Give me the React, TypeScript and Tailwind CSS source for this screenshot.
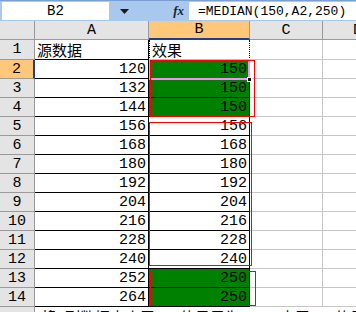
import React from "react";

const mono = { fontFamily: '"Liberation Mono", "Noto Sans CJK SC", monospace' };
const cjk = { fontFamily: '"Noto Sans CJK SC", "Liberation Sans", sans-serif' };

// rows 2..14: A value, B value, B green?
const rows: { a: string; b: string; green: boolean }[] = [
  { a: "120", b: "150", green: true },
  { a: "132", b: "150", green: true },
  { a: "144", b: "150", green: true },
  { a: "156", b: "156", green: false },
  { a: "168", b: "168", green: false },
  { a: "180", b: "180", green: false },
  { a: "192", b: "192", green: false },
  { a: "204", b: "204", green: false },
  { a: "216", b: "216", green: false },
  { a: "228", b: "228", green: false },
  { a: "240", b: "240", green: false },
  { a: "252", b: "250", green: true },
  { a: "264", b: "250", green: true },
];

const App = () => {
  return (
    <div className="relative w-[356px] h-[312px] overflow-hidden bg-white text-black">
      {/* Name box + formula bar */}
      <div className="flex h-[21px] bg-[#a9c8ee] border-t border-[#7a9fd0]">
        <div
          className="w-[107px] ml-[2px] mt-[1px] h-[18px] bg-white flex items-center justify-center text-[14px] leading-none"
          style={mono}
        >
          B2
        </div>
        <div className="w-[80px] flex items-center justify-between pl-[11px] pr-[5px]">
          <svg width="9" height="5" viewBox="0 0 9 5">
            <path d="M0 0 H9 L4.5 5 Z" fill="#1a1a1a" />
          </svg>
          <span className="italic text-[13px] font-bold text-[#222]" style={{ fontFamily: '"Liberation Serif", serif' }}>
            fx
          </span>
        </div>
        <div
          className="flex-1 mt-[1px] h-[18px] bg-white flex items-center pl-[9px] text-[13px] leading-none whitespace-nowrap"
          style={mono}
        >
          =MEDIAN(150,A2,250)
        </div>
      </div>

      {/* Sheet grid */}
      <div
        className="grid grid-cols-[35px_114px_101px_73px_60px] grid-rows-[19px_20px_repeat(14,19px)] text-[15px] leading-none"
        style={mono}
      >
        {/* header row */}
        <div className="bg-[#e4e4e4] border-r border-b border-[#9a9a9a]" />
        <div className="bg-[#e4e4e4] border-r border-b border-[#9a9a9a] flex items-center justify-center">A</div>
        <div className="bg-[#ffc77a] border-r border-[#9a9a9a] border-b-2 border-b-[#1c3f94] flex items-center justify-center">B</div>
        <div className="bg-[#e4e4e4] border-r border-b border-[#9a9a9a] flex items-center justify-center">C</div>
        <div className="bg-[#e4e4e4] border-b border-[#9a9a9a] flex items-center pl-[30px]">D</div>

        {/* row 1 */}
        <div className="bg-[#e4e4e4] border-r border-b border-[#9a9a9a] flex items-center justify-center">1</div>
        <div className="border-r border-b border-black flex items-center pl-[2px] text-[15px]" style={cjk}>
          源数据
        </div>
        <div className="border-r border-b border-black border-l border-dotted flex items-center pl-[2px] text-[15px]" style={cjk}>
          效果
        </div>
        <div className="border-r border-b border-[#c6c6c6]" />
        <div className="border-b border-[#c6c6c6]" />

        {rows.map((r, i) => (
          <React.Fragment key={i}>
            <div
              className={
                i === 0
                  ? "bg-[#ffc77a] border-r-2 border-r-[#1c3f94] border-b border-[#9a9a9a] flex items-center justify-center"
                  : "bg-[#e4e4e4] border-r border-b border-[#9a9a9a] flex items-center justify-center"
              }
            >
              {i + 2}
            </div>
            <div className="border-r border-b border-black flex items-center justify-end pr-[2px] pt-[1px]">{r.a}</div>
            <div
              className={
                r.green
                  ? "bg-[#008000] border-r border-b border-black flex items-center justify-end pr-[2px] pt-[1px]"
                  : "border-r border-b border-black flex items-center justify-end pr-[2px] pt-[1px]"
              }
            >
              {r.b}
            </div>
            <div className="border-r border-b border-[#c6c6c6]" />
            <div className="border-b border-[#c6c6c6]" />
          </React.Fragment>
        ))}

        {/* row 15, cut off */}
        <div className="bg-[#e4e4e4] border-r border-[#9a9a9a]" />
        <div className="col-span-4 pl-[6px] pt-[2px] text-[15px] whitespace-nowrap" style={cjk}>
          将A列数据中小于150的显示为150，大于250的显示为250
        </div>
      </div>

      {/* selection on B2 */}
      <div className="absolute left-[149px] top-[59px] w-[101px] h-[21px] border-2 border-[#ff8cff]" />
      <div className="absolute left-[247px] top-[77px] w-[5px] h-[5px] bg-black border border-white" />

      {/* red marks */}
      <div className="absolute left-[150px] top-[60px] w-[105px] h-[57px] border border-[#ff0000]" />
      <div className="absolute left-[149px] top-[122px] w-[103px] h-[144px] border border-[#ff0000]" />
      <div className="absolute left-[150px] top-[271px] w-[106px] h-[35px] border border-[#ff0000]" />
    </div>
  );
};

export default App;
